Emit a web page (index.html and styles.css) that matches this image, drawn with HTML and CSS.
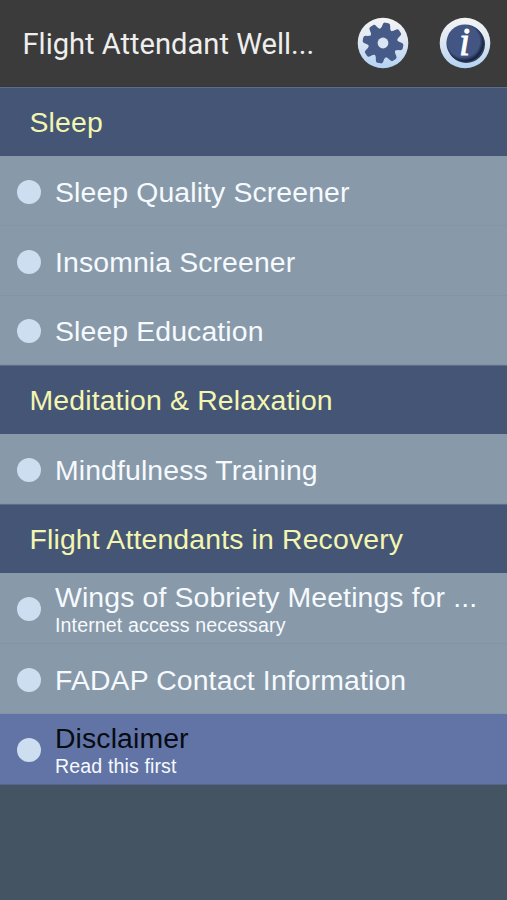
FILE: index.html
```html
<!doctype html>
<html lang="en">
<head>
<title>Flight Attendant Wellness</title>
<meta charset="utf-8">
<meta name="viewport" content="width=device-width, initial-scale=1">
<link rel="stylesheet" href="styles.css">
</head>
<body>

<div class="topbar">
	<h1>Flight Attendant Well...</h1>

	<a class="icon" href="#settings" aria-label="Settings">
		<svg width="52" height="52" viewBox="-26 -26 52 52">
			<defs>
				<linearGradient id="disc" x1="0" y1="0" x2="0" y2="1">
					<stop offset="0" stop-color="#f4f4f4"/>
					<stop offset="0.4" stop-color="#e2e9f2"/>
					<stop offset="1" stop-color="#b3d2f3"/>
				</linearGradient>
			</defs>
			<circle r="25.3" fill="url(#disc)"/>
			<g fill="#465b88">
				<circle r="14.2"/>
				<g transform="rotate(11)">
					<path id="tooth" d="M-6 -12.5 Q-4 -14.6 -3.8 -18 Q-3.5 -20.4 -1.6 -20.4 H1.6 Q3.5 -20.4 3.8 -18 Q4 -14.6 6 -12.5 Z"/>
					<use href="#tooth" transform="rotate(45)"/>
					<use href="#tooth" transform="rotate(90)"/>
					<use href="#tooth" transform="rotate(135)"/>
					<use href="#tooth" transform="rotate(180)"/>
					<use href="#tooth" transform="rotate(225)"/>
					<use href="#tooth" transform="rotate(270)"/>
					<use href="#tooth" transform="rotate(315)"/>
				</g>
			</g>
			<circle r="5.4" fill="#d9e5f2"/>
		</svg>
	</a>

	<a class="icon" href="#about" aria-label="About">
		<svg width="52" height="52" viewBox="-26 -26 52 52">
			<defs>
				<radialGradient id="edge" cx="0.46" cy="0.45" r="0.54">
					<stop offset="0.8" stop-color="#425583"/>
					<stop offset="1" stop-color="#16223f"/>
				</radialGradient>
			</defs>
			<circle r="25.3" fill="url(#disc)"/>
			<circle cx="1.2" cy="1.2" r="18.8" fill="#14203c" opacity="0.85"/>
			<circle r="18.6" fill="url(#edge)"/>
			<text class="info" x="-0.5" y="12" text-anchor="middle">i</text>
		</svg>
	</a>
</div>

<div class="list">
	<h2>Sleep</h2>
	<a class="row" href="#">
		<span class="dot"></span>
		<span class="label">Sleep Quality Screener</span>
	</a>
	<a class="row" href="#">
		<span class="dot"></span>
		<span class="label">Insomnia Screener</span>
	</a>
	<a class="row last" href="#">
		<span class="dot"></span>
		<span class="label">Sleep Education</span>
	</a>

	<h2>Meditation &amp; Relaxation</h2>
	<a class="row" href="#">
		<span class="dot"></span>
		<span class="label">Mindfulness Training</span>
	</a>

	<h2>Flight Attendants in Recovery</h2>
	<a class="row tall" href="#">
		<span class="dot"></span>
		<span class="label">Wings of Sobriety Meetings for ...
			<small>Internet access necessary</small>
		</span>
	</a>
	<a class="row" href="#">
		<span class="dot"></span>
		<span class="label">FADAP Contact Information</span>
	</a>
	<a class="row tall active" href="#">
		<span class="dot"></span>
		<span class="label">Disclaimer
			<small>Read this first</small>
		</span>
	</a>
</div>

</body>
</html>
```
FILE: styles.css
```css
* { margin: 0; padding: 0; box-sizing: border-box; }
html, body { height: 100%; }

body {
	background: #445463;
	font-family: "Liberation Sans", Arial, sans-serif;
	overflow: hidden;
}

.topbar {
	height: 87px;
	padding: 0 16px 0 22.5px;
	display: flex;
	align-items: center;
	background: #3b3b3b;
	border-bottom: 1px solid #363836;
}
.topbar h1 {
	flex: 1;
	padding-top: 1px;
	font-family: Roboto, sans-serif;
	font-size: 29.1px;
	font-weight: 400;
	white-space: nowrap;
	color: #eee;
}
.icon {
	width: 52px; height: 52px;
	margin-left: 30px;
}
.icon svg { display: block; }
.info {
	font-family: "Liberation Serif", serif;
	font-size: 40px;
	font-style: italic;
	fill: #fff;
	stroke: #fff;
	stroke-width: 0.8px;
}

.list h2 {
	height: 69px;
	padding-left: 29.5px;
	border-top: 1px solid #5c6d8f;
	font-size: 28.4px;
	font-weight: 400;
	line-height: 69px;
	letter-spacing: 0.15px;
	white-space: nowrap;
	color: #f3f6b0;
	background: #455575;
}

.row {
	height: 70px;
	padding: 2px 0 0 17px;
	display: flex;
	align-items: center;
	border-bottom: 1px solid #8395a4;
	background: #8899a9;
	color: #f6fafe;
	text-decoration: none;
}
.row.last { height: 69px; }
.row.tall { height: 71px; }
.dot {
	width: 24px; height: 24px;
	margin-right: 14px;
	border-radius: 50%;
	background: #cddef0;
}
.label {
	font-size: 28.4px;
	line-height: 32px;
	letter-spacing: 0.12px;
	white-space: nowrap;
}
.label small {
	display: block;
	font-size: 19.6px;
	line-height: 24px;
}
.row.active {
	background: #6274a5;
	border-bottom-color: #53668a;
	color: #070b14;
}
.active small { color: #f6fafe; }
```
